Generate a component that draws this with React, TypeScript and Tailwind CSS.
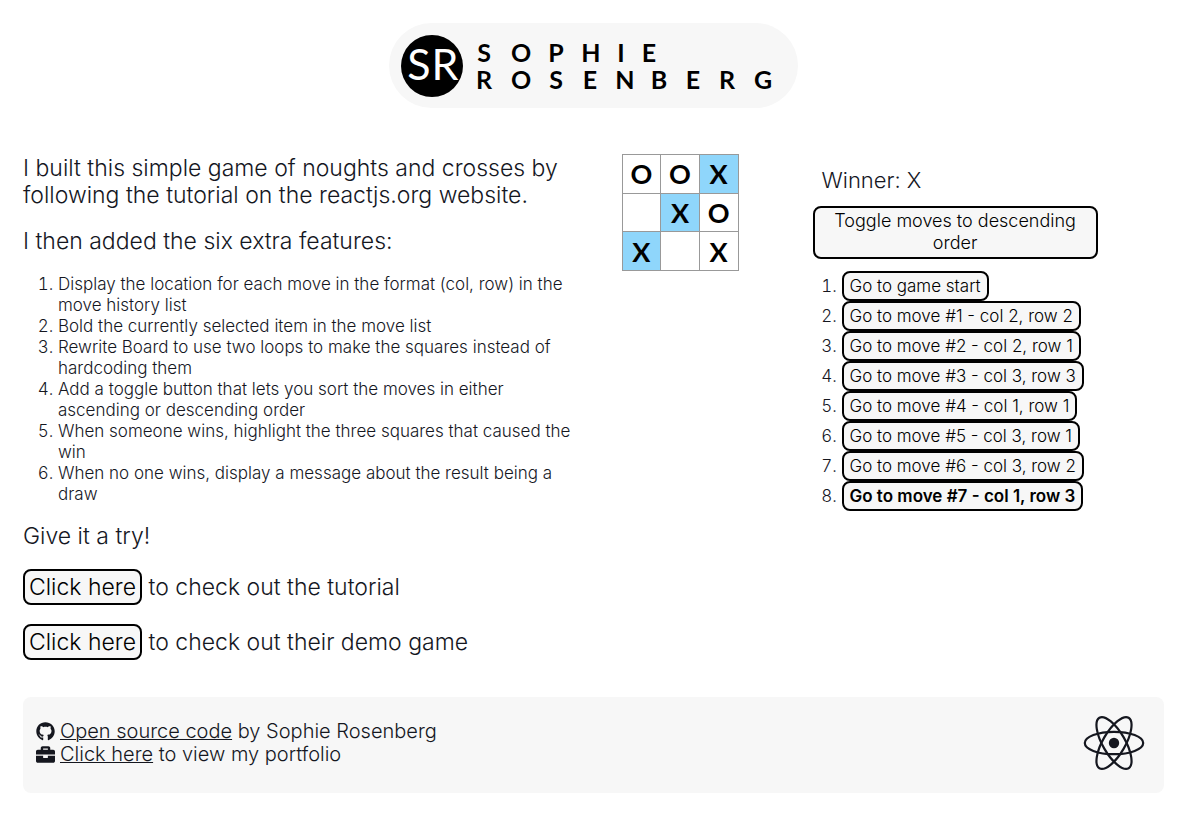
import React from "react";
import { FaBriefcase, FaGithub } from "react-icons/fa";

const features = [
  "Display the location for each move in the format (col, row) in the move history list",
  "Bold the currently selected item in the move list",
  "Rewrite Board to use two loops to make the squares instead of hardcoding them",
  "Add a toggle button that lets you sort the moves in either ascending or descending order",
  "When someone wins, highlight the three squares that caused the win",
  "When no one wins, display a message about the result being a draw",
];

const squares = ["O", "O", "X", "", "X", "O", "X", "", "X"];
const winningLine = [2, 4, 6];

const moves = [
  "Go to game start",
  "Go to move #1 - col 2, row 2",
  "Go to move #2 - col 2, row 1",
  "Go to move #3 - col 3, row 3",
  "Go to move #4 - col 1, row 1",
  "Go to move #5 - col 3, row 1",
  "Go to move #6 - col 3, row 2",
  "Go to move #7 - col 1, row 3",
];

function Logo() {
  return (
    <svg
      width="409"
      height="85"
      viewBox="0 0 409 85"
      role="img"
      aria-label="Sophie Rosenberg"
      className="max-w-full rounded-full bg-[#f7f7f7] font-[Lato,sans-serif]"
    >
      <circle cx="43" cy="43" r="31" fill="#000" />
      <g fill="#fff" fontSize="43" fontWeight="400" textAnchor="middle">
        <text x="30" y="57">S</text>
        <text x="56" y="57">R</text>
      </g>
      <g fontSize="25" fontWeight="700" textAnchor="middle">
        <text y="39" x="95 132 167 202 232 260">SOPHIE</text>
        <text y="66" x="95 132 167 201 236 270 304 338 374">ROSENBERG</text>
      </g>
    </svg>
  );
}

function ReactLogo() {
  return (
    <svg width="62" height="56" viewBox="-31 -28 62 56" role="img" aria-label="React" className="text-[#15171f]">
      <circle r="5.2" fill="currentColor" />
      <g fill="none" stroke="currentColor" strokeWidth="2.2">
        <ellipse rx="29.2" ry="11.2" />
        <ellipse rx="29.2" ry="11.2" transform="rotate(60)" />
        <ellipse rx="29.2" ry="11.2" transform="rotate(120)" />
      </g>
    </svg>
  );
}

function Board() {
  return (
    <div className="grid h-[117px] w-[117px] shrink-0 grid-cols-3 grid-rows-3 gap-px bg-[#999] p-px">
      {squares.map((value, i) => (
        <button
          key={i}
          aria-label={`Square ${i + 1}`}
          className={`flex items-center justify-center font-[Lato,sans-serif] text-[27px] leading-none font-bold text-black ${
            winningLine.includes(i) ? "bg-[#8fd6fb]" : "bg-white"
          }`}
        >
          {value}
        </button>
      ))}
    </div>
  );
}

function GameInfo() {
  return (
    <div className="ml-[74px] w-1/4 pt-3">
      <p className="pl-[9px] text-[22px] leading-7">Winner: X</p>
      <button className="mt-3 w-full rounded-lg border-2 border-black bg-[#f7f7f7] px-3 pt-[2px] pb-[3px] text-lg leading-[22px] text-black">
        Toggle moves to descending order
      </button>
      <ol className="mt-3 list-decimal pl-[29px] text-[17px]">
        {moves.map((move, i) => (
          <li key={move} className="h-[30px] leading-[26px]">
            <button
              className={`rounded-lg border-2 border-black bg-[#f7f7f7] px-[6px] leading-[26px] text-black ${
                i === moves.length - 1 ? "font-semibold" : ""
              }`}
            >
              {move}
            </button>
          </li>
        ))}
      </ol>
    </div>
  );
}

export default function App() {
  return (
    <div className="bg-white pt-[23px] pr-[25px] pl-[23px] font-[Inter,sans-serif] font-light text-[#15171f]">
      <header className="flex justify-center">
        <Logo />
      </header>
      <main className="mt-[46px] flex items-start">
        <section className="w-1/2 pt-px text-[23px] leading-[27px]">
          <p>
            I built this simple game of noughts and crosses by following the tutorial on the reactjs.org website.
          </p>
          <p className="mt-[19px]">I then added the six extra features:</p>
          <ol className="mt-[19px] list-decimal pr-4 pl-[35px] text-[17px] leading-[21px]">
            {features.map((feature) => (
              <li key={feature}>{feature}</li>
            ))}
          </ol>
          <p className="mt-[18px]">Give it a try!</p>
          <p className="mt-[19px] leading-9">
            <a href="#tutorial" className="inline-block rounded-lg border-2 border-black bg-[#f7f7f7] px-1 leading-8 text-black">
              Click here
            </a>{" "}
            to check out the tutorial
          </p>
          <p className="mt-[19px] leading-9">
            <a href="#demo" className="inline-block rounded-lg border-2 border-black bg-[#f7f7f7] px-1 leading-8 text-black">
              Click here
            </a>{" "}
            to check out their demo game
          </p>
        </section>
        <div className="ml-7">
          <Board />
        </div>
        <GameInfo />
      </main>
      <footer className="mt-[37px] flex h-24 items-center justify-between rounded-lg bg-[#f7f7f7] pr-[19px] pl-[13px] text-xl leading-[23px]">
        <div className="pb-1">
          <p className="flex items-center gap-[5px]">
            <FaGithub size={19} />
            <span>
              <a href="#source" className="underline decoration-1">Open source code</a> by Sophie Rosenberg
            </span>
          </p>
          <p className="flex items-center gap-[5px]">
            <FaBriefcase size={19} />
            <span>
              <a href="#portfolio" className="underline decoration-1">Click here</a> to view my portfolio
            </span>
          </p>
        </div>
        <div className="pb-1">
          <ReactLogo />
        </div>
      </footer>
    </div>
  );
}
